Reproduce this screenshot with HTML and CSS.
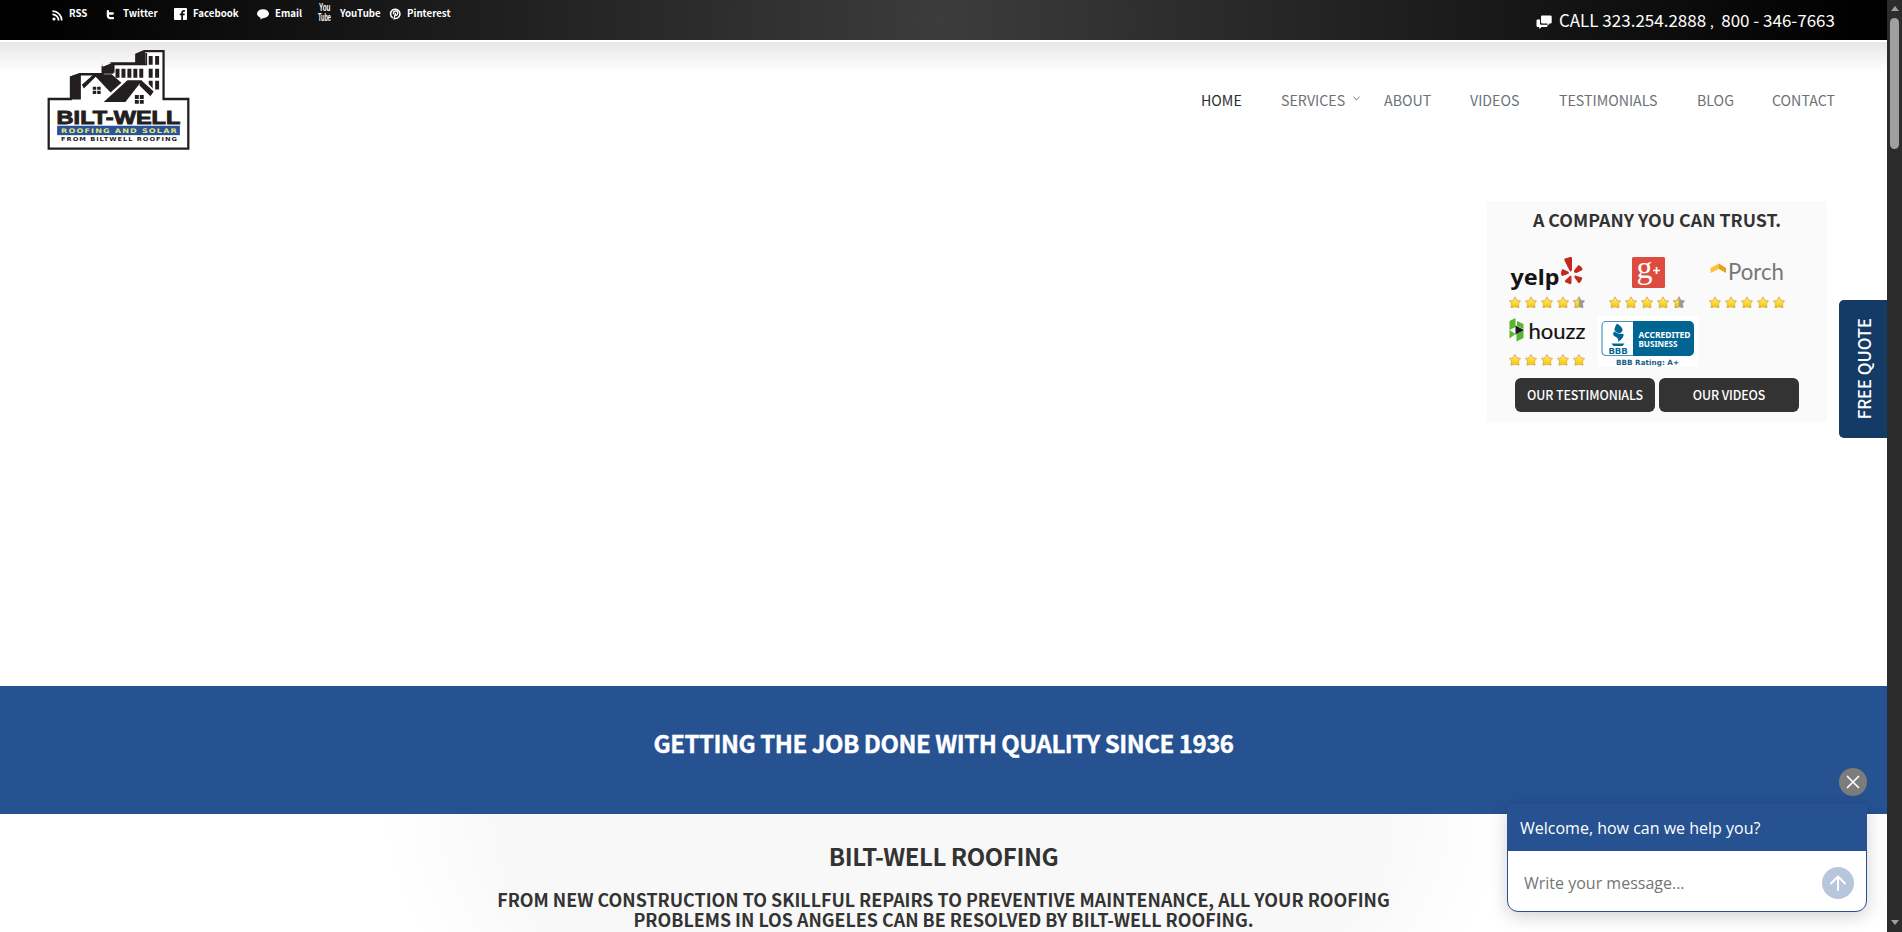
FILE: index.html
```html
<!DOCTYPE html>
<html lang="en">
<head>
<meta charset="utf-8">
<title>Bilt-Well Roofing</title>
<link rel="stylesheet" href="styles.css">
</head>
<body>
<svg class="defs" width="0" height="0" aria-hidden="true">
  <defs>
    <linearGradient id="gold" x1="0" y1="0" x2="0" y2="1"><stop offset="0" stop-color="#fff3a0"/><stop offset=".5" stop-color="#fbdc3c"/><stop offset="1" stop-color="#f2c40c"/></linearGradient>
    <path id="starshape" d="M6 .8 7.8 4.3 11.5 4.9 9.5 7.6 10 11.7 6 10.7 2 11.7 2.5 7.6.5 4.9 4.2 4.3Z"/>
    <g id="star"><use href="#starshape" fill="url(#gold)" stroke="#d6a545" stroke-width=".8" stroke-linejoin="round"/></g>
    <g id="half"><use href="#starshape" fill="#999" stroke="#999" stroke-width=".8"/><path d="M6 .8 4.2 4.3.5 4.9 2.5 7.6 2 11.7 6 10.7Z" fill="url(#gold)" stroke="#d6a545" stroke-width=".7"/></g>
    <g id="stars4"><use href="#star"/><use href="#star" x="16"/><use href="#star" x="32"/><use href="#star" x="48"/></g>
  </defs>
</svg>
<div class="window">
  <div class="page">
    <div class="topbar">
      <ul class="social">
        <li class="s-rss"><svg width="11" height="11" viewBox="0 0 11 11"><circle cx="2" cy="9" r="1.6" fill="#fff"/><path d="M.4 4.4a6 6 0 0 1 6.1 6.2M.4 1.2a9.2 9.2 0 0 1 9.3 9.4" fill="none" stroke="#fff" stroke-width="1.7"/></svg><span>RSS</span></li>
        <li class="s-twitter"><svg width="9" height="10" viewBox="0 0 9 10"><path d="M1.9 1.200v4.600a2.4 2.4 0 0 0 2.4 2.4h2.700M1.9 3.500h4.900" fill="none" stroke="#fff" stroke-width="2.3" stroke-linecap="round"/></svg><span>Twitter</span></li>
        <li class="s-facebook"><svg width="13" height="12" viewBox="0 0 13 12"><rect width="13" height="12" rx="1" fill="#fff"/><path d="M8.1 12V4.7c0-1.4.7-2 2.8-1.9M5.8 6.4h4.8" fill="none" stroke="#111" stroke-width="1.7"/></svg><span>Facebook</span></li>
        <li class="s-email"><svg width="12" height="11" viewBox="0 0 12 11"><ellipse cx="6" cy="4.6" rx="6" ry="4.4" fill="#fff"/><path d="M3.6 7.5 3.4 10.6 7.5 8.4Z" fill="#fff"/></svg><span>Email</span></li>
        <li class="s-youtube"><svg width="14" height="18" viewBox="0 0 14 18"><g class="yt"><text x="1" y="8" textLength="11.5" lengthAdjust="spacingAndGlyphs">You</text><text x="0" y="17.5" textLength="13" lengthAdjust="spacingAndGlyphs">Tube</text></g></svg><span>YouTube</span></li>
        <li class="s-pinterest"><svg width="11" height="12" viewBox="0 0 11 12"><path d="M2.800 9.900A4.700 4.700 0 1 1 5 10.600" fill="none" stroke="#fff" stroke-width="1.5"/><path d="M3.600 6.300C2.700 3.700 4.500 3 5.700 3c1.700 0 2.300 1.200 2 2.600-.4 1.700-1.900 2-2.500 1.200M5.500 4.800 3.900 11.500" fill="none" stroke="#fff" stroke-width="1.300"/></svg><span>Pinterest</span></li>
      </ul>
      <div class="call"><svg width="16" height="14" viewBox="0 0 16 14"><path d="M1.500 4.500H4v4.200a1 1 0 0 0 1 1h6.500v1a1.200 1.200 0 0 1-1.200 1.200H5.500L3.500 14l-.5-2.100H1.700A1.200 1.200 0 0 1 .5 10.700V5.500a1 1 0 0 1 1-1Z" fill="#fff"/><path d="M6.200.5h8.300a1.200 1.200 0 0 1 1.200 1.200v5.600a1.200 1.200 0 0 1-1.200 1.200h-1l-1.600 2-.6-2H6.200A1.200 1.200 0 0 1 5 7.300V1.700A1.200 1.200 0 0 1 6.200.5Z" fill="#fff"/></svg><span>CALL 323.254.2888 <small>,</small>&nbsp; 800 - 346-7663</span></div>
    </div>
    <header class="header">
      <svg class="logo" width="143" height="100" viewBox="0 0 144 101">
        <path d="M1.500 49.500H24V27.500L33 24.500H56V17L65 13.500H90V4.500L98 1.200H117.500V49.500H142.500V99.500H1.500Z" fill="#fff" stroke="#231f20" stroke-width="2.300"/>
        <path d="M23 50V27L31 24H34V50ZM56 24V17L65 13.500V17L67 24ZM89.500 14V4.500L99 1V14.500Z" fill="#231f20"/>
        <path d="M56 14.500H100V3" fill="none" stroke="#231f20" stroke-width="1.800"/>
        <path d="M56 13 56 17 65 13.500Z" fill="#fbfbfb"/>
        <path d="M56 23V17.500L65 14H68V23Z" fill="#231f20"/>
        <path d="M69 19h4v9h-4zM75 19h4v9h-4zM81 19h4v9h-4zM87 19h4v9h-4zM93 19h4v9h-4zM102.500 6h4v9h-4zM109 6h4v9h-4zM102.500 19h4v9h-4zM109 19h4v9h-4zM102.500 31h4v9h-4zM109 31h4v9h-4z" fill="#231f20"/>
        <path d="M35 38 48 26 64 39V49H35Z" fill="#fff"/>
        <path d="M35 35 47 24.500H65L75 33 64 43 49 27 37 39Z" fill="#231f20"/>
        <path d="M56 53.500 81 29.500H97L108 42" fill="none" stroke="#fff" stroke-width="2"/>
        <path d="M57 52.500 81 30.500H96L79 52.500ZM95 30.500 107.500 42 104 47 93 35.500Z" fill="#231f20"/>
        <path d="M81 52 93.500 36.500 104 46.500V52Z" fill="#fff"/>
        <path d="M46 37h3.500v3.200H46zM50.500 37H54v3.200h-3.500zM46 41.200h3.500v3.200H46zM50.500 41.200H54v3.200h-3.500zM88.500 45.500h4v4h-4zM93.500 45.500h4v4h-4zM88.500 50.500h4v3.800h-4zM93.500 50.500h4v3.800h-4z" fill="#231f20"/>
        <rect x="10" y="76.500" width="124" height="9.500" fill="#28529b"/>
        <text class="lg-name" x="9.500" y="74.500" textLength="125" lengthAdjust="spacingAndGlyphs">BILT-WELL</text>
        <text class="lg-sub" x="14" y="83.700" textLength="118" lengthAdjust="spacingAndGlyphs">ROOFING AND SOLAR</text>
        <text class="lg-from" x="14" y="92" textLength="118" lengthAdjust="spacingAndGlyphs">FROM BILTWELL ROOFING</text>
      </svg>
      <nav class="nav">
        <a class="n1 active">HOME</a><a class="n2">SERVICES<svg width="7" height="5" viewBox="0 0 7 5"><path d="M.5.700 3.500 4 6.500.700" fill="none" stroke="#777" stroke-width="1"/></svg></a><a class="n3">ABOUT</a><a class="n4">VIDEOS</a><a class="n5">TESTIMONIALS</a><a class="n6">BLOG</a><a class="n7">CONTACT</a>
      </nav>
    </header>
    <section class="hero">
      <div class="trust">
        <h3>A COMPANY YOU CAN TRUST.</h3>
        <div class="brands">
          <svg width="80" height="56" viewBox="0 0 80 56">
            <text class="yelp" x="2.500" y="29.500" textLength="49" lengthAdjust="spacingAndGlyphs">yelp</text>
            <path d="M57 3.500 62 2Q64 1.600 64 3.200V15Q63 17.500 61.500 15.500L56.500 5.500Q56 4 57 3.500ZM66 15.500 70.500 10Q74.500 12 74.500 15L68.500 18Q65.500 18 66 15.500ZM67 20.500 74 22.500Q75 23.500 72 27.500 71 28.500 70 27.500L66.500 22.500Q66 20.500 67 20.500ZM62.500 20.500Q63.500 21 63.500 22V28Q63 29.500 61.500 29L57 27Q56.500 26 57.500 25ZM54.500 14 60.500 16.800Q61.500 18 60.500 18.800L54.500 21Q53 20.500 53 18.500 53 15 54.500 14Z" fill="#c5281c"/>
            <g transform="translate(1 41)"><use href="#stars4"/><use href="#half" x="64"/></g>
          </svg>
          <svg width="80" height="56" viewBox="0 0 80 56">
            <rect x="24" y="2" width="33" height="31" rx="1.500" fill="#dd4b3e"/>
            <text class="gplus" x="28.500" y="22.500" textLength="16" lengthAdjust="spacingAndGlyphs">g</text>
            <path d="M48.500 12v7M45 15.500h7" stroke="#fff" stroke-width="1.700"/>
            <g transform="translate(1 41)"><use href="#stars4"/><use href="#half" x="64"/></g>
          </svg>
          <svg width="80" height="56" viewBox="0 0 80 56">
            <path d="M2.500 13 11 8.500V14L2.500 18Z" fill="#fdc13a"/><path d="M11 8.500 18 13V18L11 14Z" fill="#e8a01f"/>
            <text class="porch" x="20" y="25.300" textLength="56" lengthAdjust="spacingAndGlyphs">Porch</text>
            <g transform="translate(1 41)"><use href="#stars4"/><use href="#star" x="64"/></g>
          </svg>
          <svg width="80" height="56" viewBox="0 0 80 56">
            <path d="M1.500 9 7.500 6V15L1.500 18ZM1.500 18 7.500 22 1.500 26.500ZM9 9 15.500 12V17L9 14ZM8.500 22 15.500 18V26L8.500 29.500Z" fill="#58b530"/><path d="M7.500 13.500 16 18 7.500 22.500Z" fill="#1b1b1b"/>
            <text class="houzz" x="20.500" y="26.500" textLength="57" lengthAdjust="spacingAndGlyphs">houzz</text>
            <g transform="translate(1 41.500)"><use href="#stars4"/><use href="#star" x="64"/></g>
          </svg>
          <svg class="bbb" width="100" height="56" viewBox="0 0 100 56">
            <rect x="0" y="4" width="100" height="51" fill="#fff"/>
            <rect x="4" y="9.500" width="91" height="34" rx="4" fill="#fff" stroke="#4f93b6" stroke-width="1.200"/>
            <path d="M35 9H91a5 5 0 0 1 5 5V39a5 5 0 0 1-5 5H35Z" fill="#006593"/>
            <path d="M19 11.500Q26.500 16.500 24 19.500 22 22.500 17.500 19.500 15 17.500 19 11.500ZM16 19.500Q20 22 25.500 22 26.500 25.500 20 30 21 26.500 18 25 13.500 23 16 19.500ZM13.500 31.500H26.500L24.500 34H15.500Z" fill="#006593"/>
            <text class="bbb-mark" x="10.500" y="42" textLength="19" lengthAdjust="spacingAndGlyphs">BBB</text>
            <text class="bbb-w" x="40.500" y="25.500" textLength="52" lengthAdjust="spacingAndGlyphs">ACCREDITED</text>
            <text class="bbb-w" x="40.500" y="35.300" textLength="39" lengthAdjust="spacingAndGlyphs">BUSINESS</text>
            <text class="bbb-rate" x="18" y="53" textLength="63">BBB Rating: A+</text>
          </svg>
        </div>
        <div class="buttons"><a>OUR TESTIMONIALS</a><a>OUR VIDEOS</a></div>
      </div>
    </section>
    <section class="band"><h1>GETTING THE JOB DONE WITH QUALITY SINCE 1936</h1></section>
    <section class="intro">
      <h2>BILT-WELL ROOFING</h2>
      <p>FROM NEW CONSTRUCTION TO SKILLFUL REPAIRS TO PREVENTIVE MAINTENANCE, ALL YOUR ROOFING<br>PROBLEMS IN LOS ANGELES CAN BE RESOLVED BY BILT-WELL ROOFING.</p>
    </section>
    <div class="quote"><span>FREE QUOTE</span></div>
    <div class="close"><svg width="28" height="28" viewBox="0 0 28 28"><path d="M8.500 8.500 19.500 19.500M19.500 8.500 8.500 19.500" stroke="#fff" stroke-width="1.700" stroke-linecap="round"/></svg></div>
    <div class="chat">
      <div class="chat-head">Welcome, how can we help you?</div>
      <div class="chat-body"><span>Write your message...</span><svg width="32" height="32" viewBox="0 0 32 32"><circle cx="16" cy="16" r="16" fill="#b8c6dc"/><path d="M16 23V9.500M9 16.500 16 9.500 23 16.500" fill="none" stroke="#fff" stroke-width="2" stroke-linecap="round" stroke-linejoin="round"/></svg></div>
    </div>
  </div>
  <div class="scrollbar"><i class="up"></i><i class="thumb"></i><i class="down"></i></div>
</div>
</body>
</html>
```
FILE: styles.css
```css
* { box-sizing: border-box; }
body { margin: 0; width: 1902px; height: 932px; overflow: hidden; background: #fff; font-family: "Noto Sans CJK SC", "Noto Sans", sans-serif; color: #333; }
h1, h2, h3, p, ul { margin: 0; padding: 0; }
.defs { position: absolute; }
.window { display: flex; height: 932px; }
.page { position: relative; width: 1887px; height: 932px; overflow: hidden; display: flex; flex-direction: column; }

.topbar { flex: none; height: 40px; display: flex; justify-content: space-between; background: radial-gradient(circle 920px at 50% 50%, #3c3c3c, #000); color: #fff; }
.social { display: flex; list-style: none; padding-left: 52px; height: 26px; font-size: 9.700px; font-weight: 700; line-height: 26px; }
.social li { display: flex; align-items: center; white-space: nowrap; }
.social svg { flex: none; overflow: visible; }
.s-rss { width: 54px; gap: 6px; }
.s-rss svg, .s-twitter svg { margin-top: 4px; }
.s-twitter { width: 68px; gap: 8px; }
.s-facebook { width: 83px; gap: 6px; }
.s-email { width: 61px; gap: 6px; }
.s-youtube { width: 72px; gap: 8px; }
.s-youtube svg { margin-top: -2px; }
.s-pinterest { gap: 6px; }
.s-pinterest svg, .s-facebook svg, .s-email svg { margin-top: 2px; }
.yt { font: 700 10px "Liberation Sans", sans-serif; fill: #fff; }
.call { display: flex; align-items: center; gap: 7px; margin-right: 52px; height: 41px; font-size: 17px; line-height: 41px; white-space: nowrap; }
.call svg { margin-top: 2px; }
.call small { font-size: 13px; }

.header { flex: none; height: 118px; margin-top: 2px; padding: 8px 51px 0 47px; display: flex; justify-content: space-between; background: linear-gradient(#e7e7e7, #fff 31px); }
.lg-name { font: 700 18.500px "Liberation Sans", sans-serif; fill: #231f20; stroke: #231f20; stroke-width: .9px; }
.lg-sub { font: 700 6.400px "DejaVu Sans", sans-serif; letter-spacing: .9px; fill: #e4e86a; }
.lg-from { font: 700 5.500px "DejaVu Sans", sans-serif; letter-spacing: .8px; fill: #231f20; }
.nav { display: flex; height: 101px; line-height: 101px; font-size: 14.200px; color: #6c7277; }
.nav a { white-space: nowrap; }
.nav .active { color: #2b2b2b; }
.nav svg { margin: 0 0 5px 8px; }
.n1 { width: 80px; } .n2 { width: 103px; } .n3 { width: 86px; } .n4 { width: 89px; } .n5 { width: 138px; } .n6 { width: 75px; } .n7 { width: 64px; }

.hero { flex: none; height: 526px; padding: 41px 60px 0 0; display: flex; justify-content: flex-end; align-items: flex-start; }
.trust { width: 340px; height: 221px; background: #fafafa; }
.trust h3 { padding-top: 3px; height: 54px; line-height: 30px; font-size: 17.800px; font-weight: 700; text-align: center; white-space: nowrap; }
.brands { display: grid; grid-template-columns: 100px 100px 100px; grid-auto-rows: 57px; padding-left: 21px; height: 123px; }
.brands svg { overflow: visible; }
.bbb { margin-left: -10px; }
.yelp { font: 700 22px "Noto Sans", sans-serif; fill: #151515; }
.gplus { font: 31px "Liberation Serif", serif; fill: #fff; }
.porch { font: 24px Lato, sans-serif; fill: #777; }
.houzz { font: 21.500px Lato, sans-serif; fill: #111; stroke: #111; stroke-width: .2px; }
.bbb-mark { font: 700 8.500px "Noto Sans", sans-serif; fill: #006593; }
.bbb-w { font: 700 8.500px "Noto Sans", sans-serif; fill: #fff; }
.bbb-rate { font: 700 7.200px "DejaVu Sans", sans-serif; fill: #1c5f83; }
.buttons { display: flex; gap: 4px; padding-left: 28px; }
.buttons a { width: 140px; height: 34px; border-radius: 6px; background: #333; color: #fff; text-align: center; line-height: 34px; font-size: 12.400px; font-weight: 500; letter-spacing: -.1px; white-space: nowrap; }

.band { flex: none; height: 128px; background: #265291; color: #fff; text-align: center; }
.band h1 { padding-top: 37px; font-size: 24px; letter-spacing: -.47px; -webkit-text-stroke: .4px #fff; line-height: 40px; white-space: nowrap; }
.intro { flex: none; height: 118px; text-align: center; background: radial-gradient(ellipse 560px 330px at 50% 0, #f8f8f8 78%, #fff 100%); }
.intro h2 { padding-top: 22px; font-size: 24px; letter-spacing: -.45px; line-height: 40px; }
.intro p { padding-top: 13px; font-size: 17.850px; line-height: 20px; font-weight: 700; white-space: nowrap; }

.quote { position: absolute; left: 1839px; top: 300px; width: 48px; height: 138px; border-radius: 5px 0 0 5px; background: #143b66; color: #fff; display: flex; align-items: center; justify-content: center; padding-left: 2px; }
.quote span { writing-mode: vertical-rl; transform: rotate(180deg); font-size: 16.700px; font-weight: 500; line-height: 24px; white-space: nowrap; }
.close { position: absolute; left: 1839px; top: 768px; width: 28px; height: 28px; border-radius: 50%; background: #7c7c7c; }
.close svg { display: block; }
.chat { position: absolute; left: 1507px; top: 804px; width: 360px; height: 108px; border: 1px solid #265291; border-radius: 0 0 11px 11px; background: #fff; box-shadow: 0 4px 18px rgba(0,0,0,.18); font-family: "Open Sans", "Noto Sans", sans-serif; }
.chat-head { height: 46px; background: #265291; color: #fff; padding-left: 12px; line-height: 46px; font-size: 16px; }
.chat-body { height: 60px; display: flex; align-items: center; justify-content: space-between; padding: 3px 12px 0 16px; font-size: 16px; color: #757575; }

.scrollbar { width: 15px; height: 932px; background: #2c2c2c; display: flex; flex-direction: column; align-items: center; }
.up { margin-top: 6px; border: 4px solid transparent; border-top: 0; border-bottom: 5px solid #9f9f9f; }
.thumb { margin-top: 7px; width: 9px; height: 131px; border-radius: 5px; background: #9f9f9f; }
.down { margin: auto 0 7px; border: 4px solid transparent; border-bottom: 0; border-top: 5px solid #9f9f9f; }
```
